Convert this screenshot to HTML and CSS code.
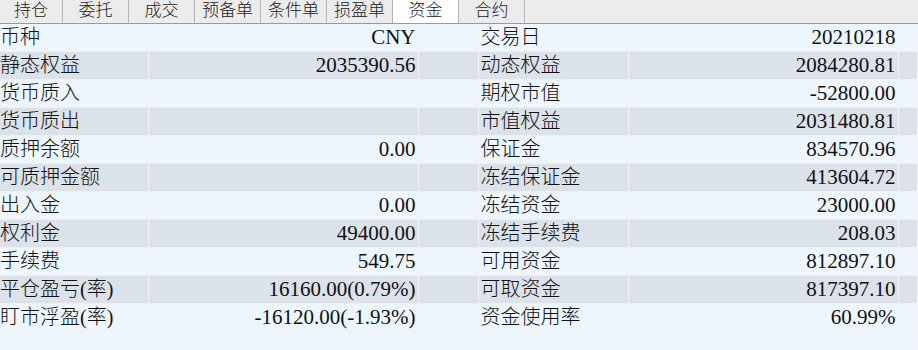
FILE: index.html
```html
<!DOCTYPE html>
<html lang="zh-CN">
<head>
  <meta charset="UTF-8">
  <title>资金</title>
  <link rel="stylesheet" href="styles.css">
</head>
<body>
<div class="tabs">
  <div class="tab first">持仓</div>
  <div class="tab">委托</div>
  <div class="tab">成交</div>
  <div class="tab">预备单</div>
  <div class="tab">条件单</div>
  <div class="tab">损盈单</div>
  <div class="tab active">资金</div>
  <div class="tab">合约</div>
</div>
<table class="fund">
  <colgroup>
    <col class="c-label"><col class="c-val"><col class="c-gap">
    <col class="c-label2"><col class="c-val"><col>
  </colgroup>
  <tr><td>币种</td><td class="num">CNY</td><td></td><td>交易日</td><td class="num">20210218</td><td></td></tr>
  <tr><td>静态权益</td><td class="num">2035390.56</td><td></td><td>动态权益</td><td class="num">2084280.81</td><td></td></tr>
  <tr><td>货币质入</td><td class="num"></td><td></td><td>期权市值</td><td class="num">-52800.00</td><td></td></tr>
  <tr><td>货币质出</td><td class="num"></td><td></td><td>市值权益</td><td class="num">2031480.81</td><td></td></tr>
  <tr><td>质押余额</td><td class="num">0.00</td><td></td><td>保证金</td><td class="num">834570.96</td><td></td></tr>
  <tr><td>可质押金额</td><td class="num"></td><td></td><td>冻结保证金</td><td class="num">413604.72</td><td></td></tr>
  <tr><td>出入金</td><td class="num">0.00</td><td></td><td>冻结资金</td><td class="num">23000.00</td><td></td></tr>
  <tr><td>权利金</td><td class="num">49400.00</td><td></td><td>冻结手续费</td><td class="num">208.03</td><td></td></tr>
  <tr><td>手续费</td><td class="num">549.75</td><td></td><td>可用资金</td><td class="num">812897.10</td><td></td></tr>
  <tr><td>平仓盈亏(率)</td><td class="num">16160.00(0.79%)</td><td></td><td>可取资金</td><td class="num">817397.10</td><td></td></tr>
  <tr><td>盯市浮盈(率)</td><td class="num">-16120.00(-1.93%)</td><td></td><td>资金使用率</td><td class="num">60.99%</td><td></td></tr>
  <tr class="blank"><td></td><td></td><td></td><td></td><td></td><td></td></tr>
</table>
</body>
</html>
```

FILE: styles.css
```css
body {
  margin: 0;
  background: #eef6fd;
  font-family: "Liberation Serif", "Noto Sans CJK SC", serif;
  font-weight: 300;
  color: #111;
  overflow: hidden;
}
.tabs {
  display: flex;
  height: 23px;
  background: #ececec;
  border-bottom: 1px solid #9a9a9a;
}
.tab {
  width: 65px;
  border-right: 1px solid #b4b4b4;
  text-align: center;
  font-size: 17px;
  line-height: 22px;
  color: #222;
}
.tab.first {
  width: 62px;
}
.tab.active {
  background: #fff;
  height: 23px;
}
.fund {
  border-collapse: collapse;
  table-layout: fixed;
  width: 918px;
  font-size: 20px;
}
.c-label { width: 148px; }
.c-val { width: 270px; }
.c-gap { width: 60px; }
.c-label2 { width: 150px; }
.fund td {
  height: 27px;
  padding: 0 2px;
  line-height: 27px;
  white-space: nowrap;
  overflow: hidden;
  border-right: 1px solid #f6f3f3;
  border-bottom: 1px solid #f3eeee;
}
.fund td:first-child {
  padding-left: 0;
}
.fund tr:nth-child(even) td {
  background: #dce2e9;
}
.fund tr.blank td {
  background: #eef6fd;
}
.fund .num {
  text-align: right;
  font-size: 21px;
}
```
